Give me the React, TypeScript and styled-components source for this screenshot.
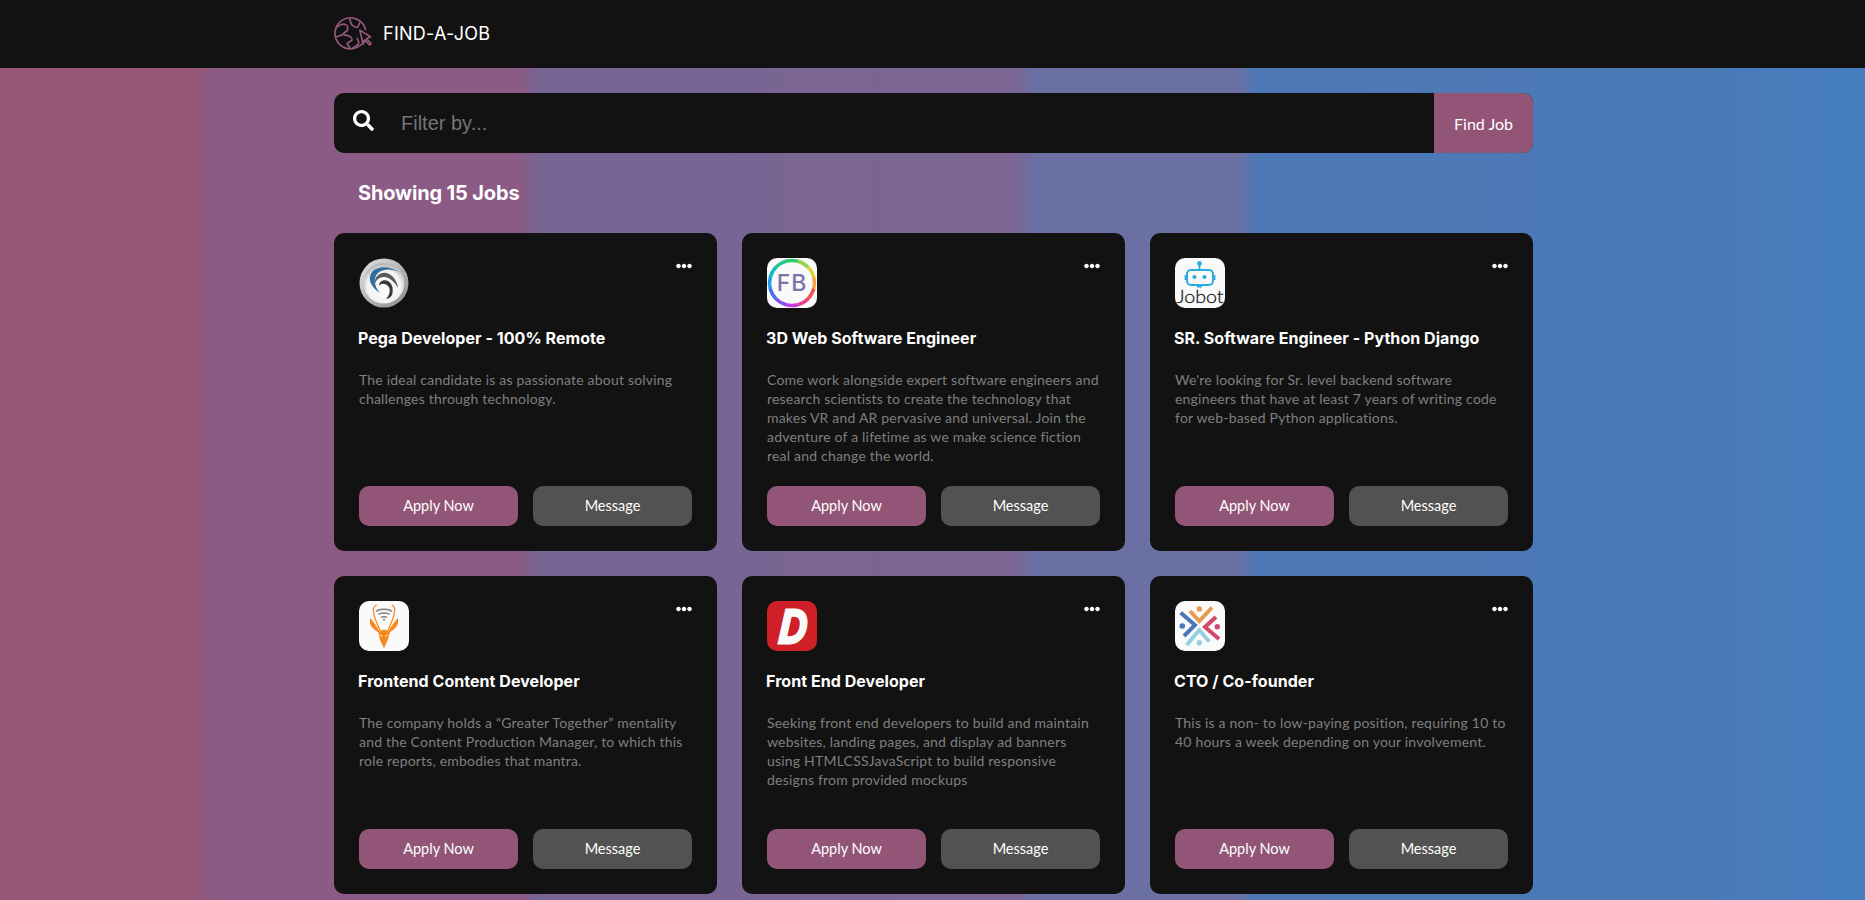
import React from "react";
import styled, { createGlobalStyle } from "styled-components";
import { FaSearch, FaEllipsisH } from "react-icons/fa";

const GlobalStyle = createGlobalStyle`
  html, body {
    margin: 0;
    padding: 0;
    height: 900px;
    overflow: hidden;
  }
  * {
    box-sizing: border-box;
  }
`;

const headingFont = `"Inter", "Liberation Sans", sans-serif`;
const bodyFont = `"Lato", "Open Sans", sans-serif`;

const Page = styled.div`
  min-height: 900px;
  background: linear-gradient(
    to right,
    #955577 0,
    #955577 197px,
    #8b5a85 215px,
    #8b5a85 520px,
    #776594 538px,
    #7c6592 1015px,
    #6a70a4 1035px,
    #6a70a4 1240px,
    #4d78b5 1255px,
    #4b79b7 1700px,
    #457fc0 1865px
  );
`;

const Header = styled.header`
  height: 68px;
  background: #121212;
`;

const Inner = styled.div`
  width: 1199px;
  margin-left: 334px;
`;

const Brand = styled(Inner)`
  height: 68px;
  display: flex;
  align-items: center;
  gap: 9px;
  padding-bottom: 1px;
`;

const BrandName = styled.span`
  font-family: ${headingFont};
  font-size: 18px;
  font-weight: 400;
  letter-spacing: 0.25px;
  color: #fff;
`;

const SearchBar = styled.div`
  margin-top: 25px;
  height: 60px;
  display: flex;
  align-items: stretch;
  background: #121212;
  border-radius: 10px;
  overflow: hidden;
`;

const SearchIcon = styled.div`
  width: 67px;
  flex: none;
  display: flex;
  align-items: center;
  justify-content: flex-end;
  padding: 0 27px 6px 0;
  color: #fff;
  font-size: 21px;
`;

const SearchInput = styled.input`
  flex: 1;
  border: 0;
  outline: 0;
  background: transparent;
  padding: 0;
  font-family: "Liberation Sans", Arial, sans-serif;
  font-size: 20px;
  color: #fff;
  &::placeholder {
    color: #757575;
    opacity: 1;
  }
`;

const FindButton = styled.button`
  width: 99px;
  flex: none;
  border: 0;
  background: #925577;
  color: #fff;
  font-family: ${bodyFont};
  font-size: 16px;
`;

const ResultCount = styled.h2`
  margin: 0;
  height: 80px;
  padding-left: 24px;
  display: flex;
  align-items: center;
  font-family: ${headingFont};
  font-size: 20px;
  font-weight: 700;
  letter-spacing: -0.15px;
  color: #fff;
`;

const CardGrid = styled.div`
  display: grid;
  grid-template-columns: repeat(3, 1fr);
  gap: 25px;
`;

const Card = styled.article`
  height: 318px;
  padding: 25px;
  display: flex;
  flex-direction: column;
  background: #121212;
  border-radius: 10px;
`;

const CardTop = styled.div`
  display: flex;
  justify-content: space-between;
  align-items: flex-start;
  height: 50px;
`;

const More = styled.div`
  display: flex;
  color: #fff;
  font-size: 16px;
`;

const LogoBox = styled.div`
  width: 50px;
  height: 50px;
  svg {
    display: block;
    overflow: visible;
  }
`;

const JobTitle = styled.h3`
  margin: 20px 0 0 -1px;
  line-height: 20px;
  font-family: ${headingFont};
  font-size: 16px;
  font-weight: 700;
  letter-spacing: 0.05px;
  color: #fff;
`;

const JobText = styled.p`
  margin: 22px 0 0;
  font-family: ${bodyFont};
  font-size: 14px;
  letter-spacing: 0.2px;
  line-height: 19px;
  color: #7f7f7f;
`;

const Actions = styled.div`
  margin-top: auto;
  display: grid;
  grid-template-columns: 1fr 1fr;
  gap: 15px;
`;

const ActionButton = styled.button<{ $primary?: boolean }>`
  height: 40px;
  border: 0;
  border-radius: 10px;
  padding: 0 0 2px;
  background: ${(p) => (p.$primary ? "#925577" : "#525252")};
  color: #fff;
  font-family: ${bodyFont};
  font-size: 14.5px;
`;

const GlobeLogo = () => (
  <svg width="40" height="36" viewBox="0 0 40 36" fill="none" stroke="#98597d" strokeWidth="1.600" strokeLinejoin="round" strokeLinecap="round">
    <path d="M31.500 13.500A15.500 15.500 0 1 0 30.500 24" />
    <path d="M3.800 10.800C6 8.500 8 8 9.800 8.100 12 8.300 13.800 10 13.800 11.500 13.800 13 13.100 14 13.100 14.800 11 16 9.500 17.500 8.100 19.100 6 20 4 20.300 2.500 20.800" />
    <path d="M15.800 3.100C16.500 5 16.500 7.500 18.100 9.100 20 10.500 21.500 11.500 23.100 11.500 24.500 10 25.300 8 25.800 6.800" />
    <path d="M10.500 19.100C12.500 19 15 19.500 16.500 20.800 17.500 21.800 18.500 23 18.100 24.100 17 25.500 14 26 13.100 27.500 13.500 29 15 30 15.800 31.500" />
    <path d="M18.100 32.500C20 31 23.500 29.500 24.800 27.500 25 25.500 24 24 23.100 22.500" />
    <path d="M25.800 14.100L29.100 28.100 31.100 24.100 35.800 29.100 37.100 27.500 32.500 22.800 36.500 20.800Z" />
  </svg>
);

const PegaLogo = () => (
  <svg width="50" height="50" viewBox="0 0 50 50" fill="none">
    <defs>
      <linearGradient id="pega-rim" x1="0" y1="0" x2="1" y2="1">
        <stop offset="0" stopColor="#e4e4e4" />
        <stop offset="1" stopColor="#8a8a8a" />
      </linearGradient>
      <radialGradient id="pega-face" cx="50%" cy="60%" r="55%">
        <stop offset="0" stopColor="#ffffff" />
        <stop offset="0.75" stopColor="#f2f2f2" />
        <stop offset="1" stopColor="#bcbcbc" />
      </radialGradient>
    </defs>
    <circle cx="25" cy="25" r="24.500" fill="url(#pega-rim)" />
    <circle cx="25" cy="25" r="20.500" fill="url(#pega-face)" />
    <path d="M21 35C12 29 8 21 13 14 18 8 32 7 41 15 33 10 24 11 19 15 14 20 15 28 21 35z" fill="#2f6f9f" />
    <path d="M16 26C15 19 21 14 27 15 33 16 38 22 39 30 35 23 30 19 25 19 20 19 17 22 16 26z" fill="#5a5a5a" />
    <path d="M20 28C20 23 25 21 29 23 33 25 35 31 33 37 31 40 29 41 27 41 31 37 32 31 29 28 26 25 22 25 20 28z" fill="#3a3a3a" />
  </svg>
);

const ringColors = ["#2ecc71", "#8fd34f", "#dfd23c", "#f5a13c", "#f2554e", "#e93f8e", "#c23fe0", "#8a4fe8", "#4a6fee", "#1f9ae8", "#18b8c8", "#22c78f"];

const ringSegment = (i: number) => {
  const r = 22.500;
  const a0 = (i * 30 - 15 - 90) * (Math.PI / 180);
  const a1 = (i * 30 + 16 - 90) * (Math.PI / 180);
  const x0 = 25 + r * Math.cos(a0);
  const y0 = 25 + r * Math.sin(a0);
  const x1 = 25 + r * Math.cos(a1);
  const y1 = 25 + r * Math.sin(a1);
  return `M${x0} ${y0}A${r} ${r} 0 0 1 ${x1} ${y1}`;
};

const FbLogo = () => (
  <svg width="50" height="50" viewBox="0 0 50 50" fill="none">
    <rect width="50" height="50" rx="10" fill="#fafafa" />
    {ringColors.map((c, i) => (
      <path key={c} d={ringSegment(i)} stroke={c} strokeWidth="3.500" />
    ))}
    <text x="25" y="33" textAnchor="middle" fontFamily="Inter, sans-serif" fontSize="23" fontWeight="500" letterSpacing="1" fill="#7a72a8">
      FB
    </text>
  </svg>
);

const JobotLogo = () => (
  <svg width="50" height="50" viewBox="0 0 50 50" fill="none">
    <rect width="50" height="50" rx="10" fill="#fafafa" />
    <circle cx="24.500" cy="5.500" r="2.400" fill="#29abe2" />
    <path d="M24.500 6v6" stroke="#29abe2" strokeWidth="1.800" />
    <rect x="12" y="12" width="26" height="15" rx="4" stroke="#29abe2" strokeWidth="2" />
    <path d="M10.500 17v5M39.500 17v5M22 28.500h5" stroke="#29abe2" strokeWidth="1.800" />
    <circle cx="19.500" cy="19" r="2.100" fill="#29abe2" />
    <circle cx="29.500" cy="19" r="2.100" fill="#29abe2" />
    <text x="1.500" y="44.500" textLength="47" lengthAdjust="spacingAndGlyphs" fontFamily="Lato, sans-serif" fontSize="18.500" fontWeight="300" fill="#1c1c1c" stroke="#1c1c1c" strokeWidth="0.300">
      Jobot
    </text>
  </svg>
);

const GazelleLogo = () => (
  <svg width="50" height="50" viewBox="0 0 50 50" fill="none">
    <rect width="50" height="50" rx="10" fill="#fafafa" />
    <path d="M17 10.500c3-3 13-3 16 0M19.500 13.500c2-2 9-2 11 0M22 16.500c1-1 5-1 6 0" stroke="#7d7d7d" strokeWidth="1.400" />
    <circle cx="25" cy="18.800" r="1" fill="#7d7d7d" />
    <g stroke="#f5891f" strokeWidth="1.200">
      <path d="M17.700 4C15 5.500 14 7 14.300 9 14.500 12 15 14 16 17 17.500 22 20 27 22.700 32" />
      <path d="M32.700 4C35.500 5.500 36 7 35.700 9 35.500 12 35 14 34 17 32.500 22 30 27 27.700 32" />
    </g>
    <path d="M11 17C10.500 21 11 24 12.700 25.700 15 28.500 18 31 21 32 20 29 18.500 26.500 16.700 24 15 21.500 13 19 11 17z" fill="#f5891f" />
    <path d="M39 17C39.500 21 39 24 37.300 25.700 35 28.500 32 31 29 32 30 29 31.500 26.500 33.300 24 35 21.500 37 19 39 17z" fill="#f5891f" />
    <path d="M19.300 30.700L25 28.500 31 30.700 28.700 39 25 47.300 21 39z" fill="#f5891f" />
    <path d="M21 34l2.500 1M29 34l-2.500 1" stroke="#fbd9a8" strokeWidth="1.200" />
  </svg>
);

const DashLogo = () => (
  <svg width="50" height="50" viewBox="0 0 50 50">
    <rect width="50" height="50" rx="10" fill="#d02027" />
    <text transform="translate(25 41.500) scale(0.8 1) skewX(-5)" textAnchor="middle" fontFamily="Liberation Sans, sans-serif" fontSize="48" fontWeight="700" fontStyle="italic" fill="#fafafa" stroke="#fafafa" strokeWidth="3">
      D
    </text>
  </svg>
);

const CrossLogo = () => (
  <svg width="50" height="50" viewBox="0 0 50 50" fill="none" strokeWidth="4">
    <rect width="50" height="50" rx="10" fill="#fafafa" />
    <path d="M15 10l9.300 10L37 6.500" stroke="#e89a50" />
    <circle cx="24.300" cy="8" r="2.700" fill="#e89a50" />
    <path d="M5.700 11.700L20 24 9 35" stroke="#4a78b8" />
    <circle cx="7.300" cy="25" r="2.800" fill="#4a78b8" />
    <path d="M44 38L30 26l11-10" stroke="#d04a6a" />
    <circle cx="42.300" cy="25.700" r="2.700" fill="#d04a6a" />
    <path d="M11.700 44l12.600-15L34.300 40.700" stroke="#96d0e0" />
    <circle cx="24.300" cy="41.700" r="2.700" fill="#96d0e0" />
  </svg>
);

const jobs = [
  {
    logo: <PegaLogo />,
    title: "Pega Developer - 100% Remote",
    text: "The ideal candidate is as passionate about solving challenges through technology.",
  },
  {
    logo: <FbLogo />,
    title: "3D Web Software Engineer",
    text: "Come work alongside expert software engineers and research scientists to create the technology that makes VR and AR pervasive and universal. Join the adventure of a lifetime as we make science fiction real and change the world.",
  },
  {
    logo: <JobotLogo />,
    title: "SR. Software Engineer - Python Django",
    text: "We're looking for Sr. level backend software engineers that have at least 7 years of writing code for web-based Python applications.",
  },
  {
    logo: <GazelleLogo />,
    title: "Frontend Content Developer",
    text: "The company holds a “Greater Together” mentality and the Content Production Manager, to which this role reports, embodies that mantra.",
  },
  {
    logo: <DashLogo />,
    title: "Front End Developer",
    text: "Seeking front end developers to build and maintain websites, landing pages, and display ad banners using HTMLCSSJavaScript to build responsive designs from provided mockups",
  },
  {
    logo: <CrossLogo />,
    title: "CTO / Co-founder",
    text: "This is a non- to low-paying position, requiring 10 to 40 hours a week depending on your involvement.",
  },
];

export default function App() {
  return (
    <>
      <GlobalStyle />
      <Page>
        <Header>
          <Brand>
            <GlobeLogo />
            <BrandName>FIND-A-JOB</BrandName>
          </Brand>
        </Header>
        <Inner>
          <SearchBar>
            <SearchIcon>
              <FaSearch />
            </SearchIcon>
            <SearchInput placeholder="Filter by..." />
            <FindButton>Find Job</FindButton>
          </SearchBar>
          <ResultCount>Showing 15 Jobs</ResultCount>
          <CardGrid>
            {jobs.map((job) => (
              <Card key={job.title}>
                <CardTop>
                  <LogoBox>{job.logo}</LogoBox>
                  <More>
                    <FaEllipsisH />
                  </More>
                </CardTop>
                <JobTitle>{job.title}</JobTitle>
                <JobText>{job.text}</JobText>
                <Actions>
                  <ActionButton $primary>Apply Now</ActionButton>
                  <ActionButton>Message</ActionButton>
                </Actions>
              </Card>
            ))}
          </CardGrid>
        </Inner>
      </Page>
    </>
  );
}
